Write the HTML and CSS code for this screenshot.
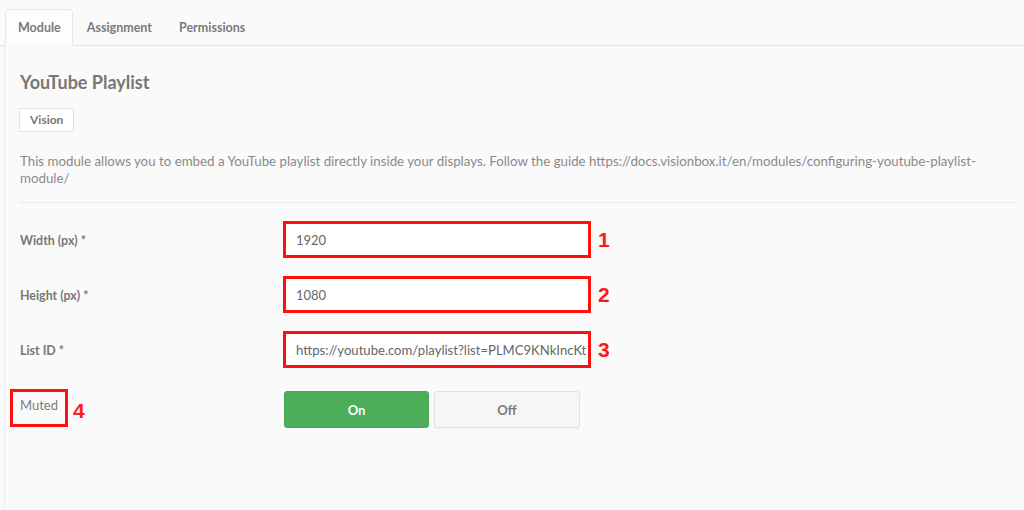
FILE: index.html
```html
<!DOCTYPE html>
<html lang="en">
<head>
<meta charset="utf-8">
<title>YouTube Playlist</title>
<link rel="stylesheet" href="styles.css">
</head>
<body>
<div class="tabs">
  <div class="tab active">Module</div>
  <div class="tab">Assignment</div>
  <div class="tab">Permissions</div>
</div>
<div class="panel">
  <h1 class="title">YouTube Playlist</h1>
  <span class="badge">Vision</span>
  <p class="desc">This module allows you to embed a YouTube playlist directly inside your displays. Follow the guide https://docs.visionbox.it/en/modules/configuring-youtube-playlist-module/</p>
  <hr class="sep">
  <div class="form">
    <div class="row">
      <label class="label">Width (px) *</label>
      <div class="field"><input class="input" type="text" value="1920"><span class="num">1</span></div>
    </div>
    <div class="row">
      <label class="label">Height (px) *</label>
      <div class="field"><input class="input" type="text" value="1080"><span class="num">2</span></div>
    </div>
    <div class="row">
      <label class="label">List ID *</label>
      <div class="field"><input class="input input-url" type="text" value="https://youtube.com/playlist?list=PLMC9KNkIncKtPzgY-5rmhvj7fax8fdxoj"><span class="num">3</span></div>
    </div>
    <div class="row row-toggle">
      <div class="label-wrap"><span class="label boxed">Muted</span><span class="num num4">4</span></div>
      <div class="toggle">
        <button class="btn btn-on" type="button">On</button>
        <button class="btn btn-off" type="button">Off</button>
      </div>
    </div>
  </div>
</div>
</body>
</html>
```
FILE: styles.css
```css
* { box-sizing: border-box; }
html, body { height: 100%; }
body {
  margin: 0;
  padding-top: 9px;
  background: #fafafa;
  font-family: Lato, "Open Sans", sans-serif;
  color: #777;
  display: flex;
  flex-direction: column;
  overflow: hidden;
}
.tabs {
  display: flex;
  padding-left: 5px;
  border-bottom: 1px solid #e6e6e6;
  height: 37px;
}
.tab {
  height: 36px;
  line-height: 35px;
  padding: 0 12.5px;
  font-size: 12.5px;
  font-weight: 700;
  color: #7a7a7a;
  border: 1px solid transparent;
  border-bottom: none;
  border-radius: 4px 4px 0 0;
}
.tab.active {
  background: #fdfdfd;
  border-color: #e6e6e6;
  height: 37px;
  padding: 0 11.5px 0 12px;
}
.panel {
  flex: 1;
  margin-left: 4px;
  border-left: 1px solid #ececec;
  padding: 24px 7px 0 15px;
}
.title {
  margin: 0;
  font-size: 18px;
  line-height: 24px;
  font-weight: 700;
  color: #777;
}
.badge {
  display: inline-block;
  margin-top: 14px;
  margin-left: -1px;
  height: 24px;
  line-height: 22px;
  padding: 0 10px;
  border: 1px solid #e2e2e2;
  background: #fff;
  font-size: 12px;
  font-weight: 700;
  color: #777;
}
.desc {
  margin: 21px 0 0;
  font-size: 13.3px;
  line-height: 17px;
  color: #8a8a8a;
  padding-right: 20px;
}
.sep {
  margin: 15px 0 0 -1px;
  border: none;
  border-top: 1px solid #e9e9e9;
  height: 0;
}
.form {
  display: flex;
  flex-direction: column;
  gap: 18px;
  margin-top: 18px;
}
.row {
  display: grid;
  grid-template-columns: 263px auto;
  align-items: center;
}
.label {
  font-size: 12.4px;
  font-weight: 700;
  color: #777;
  padding-top: 2px;
}
.field {
  display: flex;
  align-items: center;
}
.input {
  width: 308px;
  height: 37px;
  border: 3px solid #ff1010;
  background: #fff;
  padding: 0 4px 0 10px;
  font-family: Lato, "Open Sans", sans-serif;
  font-size: 13px;
  color: #666;
  outline: none;
  margin: 0;
}
.input-url {
  padding-right: 2px;
  font-size: 13.1px;
}
.num {
  font-family: "Liberation Sans", Arial, sans-serif;
  font-weight: 700;
  font-size: 21px;
  color: #ff1a1a;
  margin-left: 7px;
  line-height: 1;
}
.row-toggle {
  align-items: start;
  margin-top: 3px;
}
.label-wrap {
  display: flex;
  align-items: center;
  margin-left: -10px;
}
.label.boxed {
  display: block;
  border: 3px solid #ff1010;
  height: 38px;
  padding: 5px 7px 0 7px;
  line-height: 17px;
  font-size: 13px;
  font-weight: 400;
  color: #7a7a7a;
}
.num4 {
  margin-left: 5px;
  margin-top: 4px;
}
.toggle {
  display: flex;
  gap: 5px;
  margin-top: 2px;
  margin-left: 1px;
}
.btn {
  width: 145px;
  height: 37px;
  border-radius: 3px;
  font-family: Lato, "Open Sans", sans-serif;
  font-size: 13px;
  font-weight: 700;
  padding: 0;
  margin: 0;
}
.btn-on {
  background: #4dad59;
  border: 1px solid #48a653;
  color: #fff;
}
.btn-off {
  width: 146px;
  background: #f6f6f6;
  border: 1px solid #e2e2e2;
  color: #7a7a7a;
  box-shadow: 0 1px 1px rgba(0,0,0,0.04);
}
```
